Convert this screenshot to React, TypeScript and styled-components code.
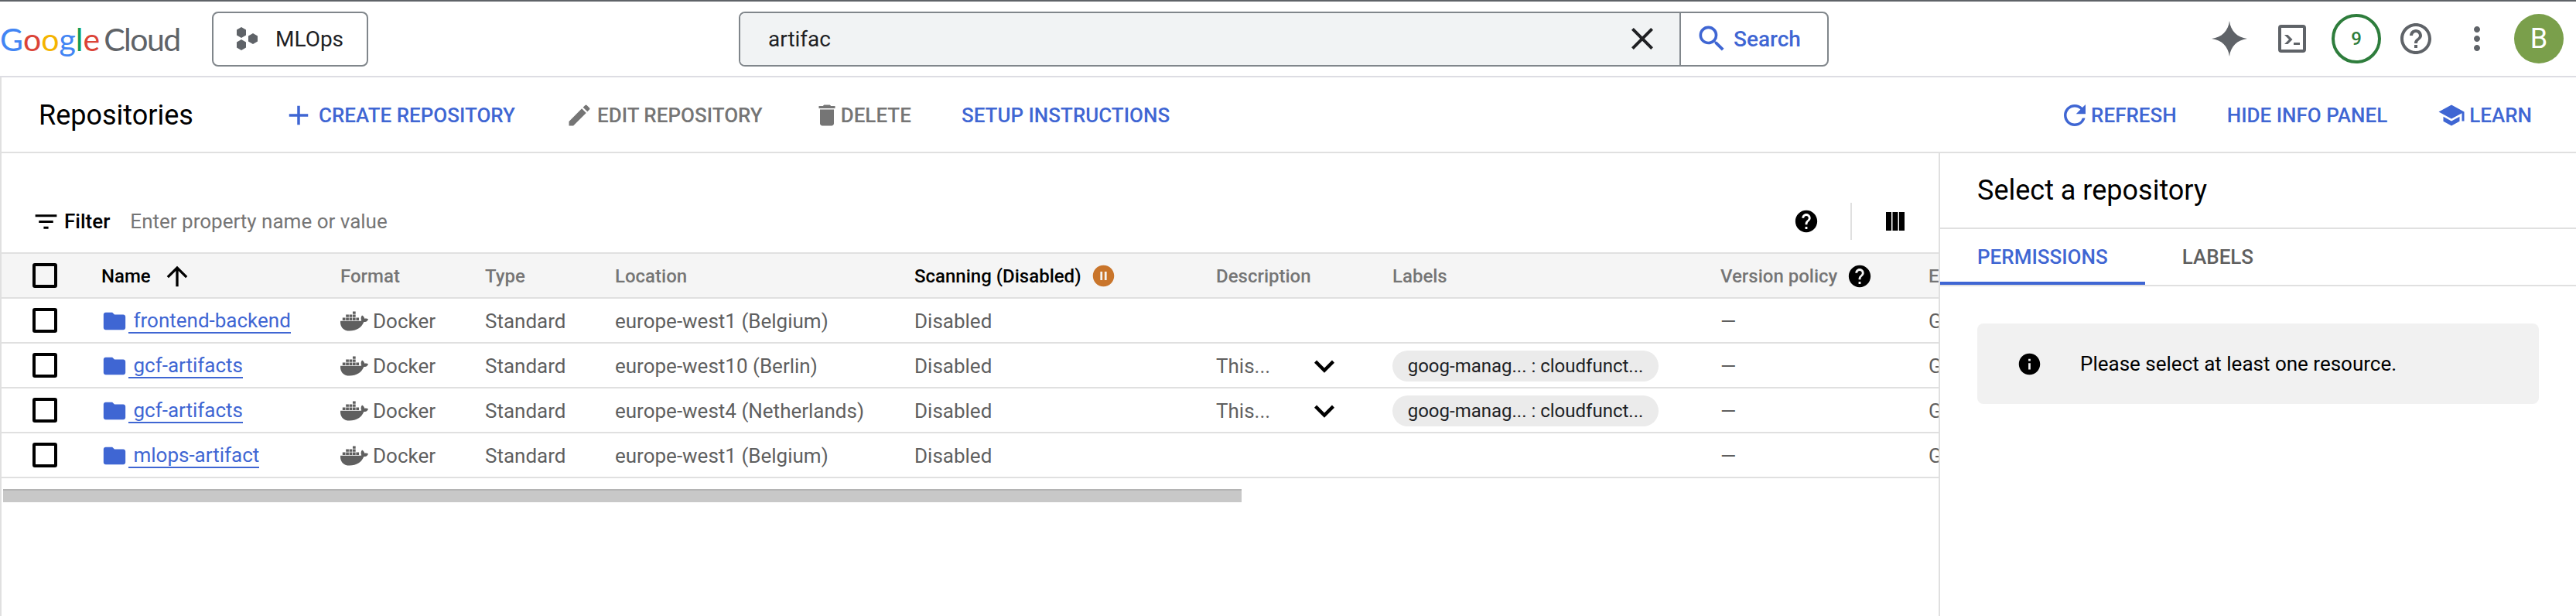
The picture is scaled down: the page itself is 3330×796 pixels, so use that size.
import React from 'react';
import styled, { createGlobalStyle } from 'styled-components';
import {
  MdAdd,
  MdArrowUpward,
  MdClose,
  MdCreate,
  MdDelete,
  MdExpandMore,
  MdFilterList,
  MdFolder,
  MdHelp,
  MdHelpOutline,
  MdInfo,
  MdMoreVert,
  MdPauseCircleFilled,
  MdRefresh,
  MdSchool,
  MdSearch,
} from 'react-icons/md';
import { FaDocker } from 'react-icons/fa';

const BLUE = '#3f66d3';
const LINE = '#e0e0e0';

type Repo = { name: string; location: string; managed: boolean };

const repos: Repo[] = [
  { name: 'frontend-backend', location: 'europe-west1 (Belgium)', managed: false },
  { name: 'gcf-artifacts', location: 'europe-west10 (Berlin)', managed: true },
  { name: 'gcf-artifacts', location: 'europe-west4 (Netherlands)', managed: true },
  { name: 'mlops-artifact', location: 'europe-west1 (Belgium)', managed: false },
];

const App: React.FC = () => {
  return (
    <>
      <GlobalStyle />
      <Page>
        <TopBar>
          <Logo>
            <Letter $c="#4285f4">G</Letter>
            <Letter $c="#db4437">o</Letter>
            <Letter $c="#f4b400">o</Letter>
            <Letter $c="#4285f4">g</Letter>
            <Letter $c="#0f9d58">l</Letter>
            <Letter $c="#db4437">e</Letter>
            <CloudWord>Cloud</CloudWord>
          </Logo>
          <ProjectButton>
            <svg width="28" height="30" viewBox="0 0 28 30" fill="#5f6368">
              <polygon points="6,0 12,3.5 12,10.5 6,14 0,10.5 0,3.5" />
              <polygon points="6,16 12,19.5 12,26.5 6,30 0,26.5 0,19.5" />
              <polygon points="21,8 27,11.5 27,18.5 21,22 15,18.5 15,11.5" />
            </svg>
            MLOps
          </ProjectButton>
          <SearchBox>
            <SearchInput>
              <span>artifac</span>
              <MdClose size={48} color="#202124" />
            </SearchInput>
            <SearchButton>
              <MdSearch size={44} />
              Search
            </SearchButton>
          </SearchBox>
          <TopIcons>
            <svg width="46" height="46" viewBox="0 0 46 46" fill="#5f6368">
              <path d="M23 0C24.5 13 33 21.5 46 23 33 24.5 24.5 33 23 46 21.5 33 13 24.5 0 23 13 21.5 21.5 13 23 0Z" />
            </svg>
            <TerminalIcon>
              <svg width="36" height="36" viewBox="0 0 36 36" fill="none">
                <rect x="2" y="2" width="32" height="32" rx="2" stroke="#5f6368" strokeWidth="4" />
                <path d="M8 13h4.5l6 6-6 6H8l6-6z" fill="#5f6368" />
                <rect x="20" y="23" width="8" height="3" fill="#5f6368" />
              </svg>
            </TerminalIcon>
            <CountBadge>9</CountBadge>
            <HelpOutlineIcon>
              <MdHelpOutline size={48} color="#5f6368" />
            </HelpOutlineIcon>
            <DotsIcon>
              <MdMoreVert size={48} color="#5f6368" />
            </DotsIcon>
            <Avatar>B</Avatar>
          </TopIcons>
        </TopBar>

        <Toolbar>
          <PageTitle>Repositories</PageTitle>
          <ActionGroup>
            <Action>
              <MdAdd size={42} />
              CREATE REPOSITORY
            </Action>
            <Action $muted>
              <MdCreate size={36} />
              EDIT REPOSITORY
            </Action>
            <Action $muted $tight>
              <MdDelete size={36} />
              DELETE
            </Action>
            <Action>SETUP INSTRUCTIONS</Action>
          </ActionGroup>
          <RightActions>
            <Action $tight>
              <MdRefresh size={42} />
              REFRESH
            </Action>
            <Action>HIDE INFO PANEL</Action>
            <Action>
              <MdSchool size={36} />
              LEARN
            </Action>
          </RightActions>
        </Toolbar>

        <Main>
          <TableArea>
            <FilterBar>
              <MdFilterList size={37} color="#000" />
              <FilterLabel>Filter</FilterLabel>
              <FilterHint>Enter property name or value</FilterHint>
              <FilterTools>
                <MdHelp size={34} color="#000" />
                <ToolDivider />
                <svg width="24" height="24" viewBox="0 0 24 24" fill="#000">
                  <rect x="0" width="7" height="24" />
                  <rect x="8.5" width="7" height="24" />
                  <rect x="17" width="7" height="24" />
                </svg>
              </FilterTools>
            </FilterBar>

            <HeadRow>
              <CheckBox />
              <HeadCell $strong>
                Name
                <SortIcon>
                  <MdArrowUpward size={40} color="#000" />
                </SortIcon>
              </HeadCell>
              <HeadCell>Format</HeadCell>
              <HeadCell>Type</HeadCell>
              <HeadCell>Location</HeadCell>
              <HeadCell $strong>
                Scanning (Disabled)
                <MdPauseCircleFilled size={33} color="#c9752b" />
              </HeadCell>
              <HeadCell>Description</HeadCell>
              <HeadCell>Labels</HeadCell>
              <HeadCell>
                Version policy
                <MdHelp size={34} color="#000" />
              </HeadCell>
              <HeadCell>Encryption</HeadCell>
            </HeadRow>

            {repos.map((repo, i) => (
              <BodyRow key={i}>
                <CheckBox />
                <NameCell>
                  <MdFolder size={34} color={BLUE} />
                  <RepoLink>&nbsp;{repo.name}</RepoLink>
                </NameCell>
                <DockerCell>
                  <FaDocker size={36} color="#5f5f5f" />
                  Docker
                </DockerCell>
                <Cell>Standard</Cell>
                <Cell>{repo.location}</Cell>
                <Cell>Disabled</Cell>
                <DescriptionCell>
                  {repo.managed && (
                    <>
                      <span>This...</span>
                      <MdExpandMore size={52} color="#000" />
                    </>
                  )}
                </DescriptionCell>
                <Cell>{repo.managed && <LabelChip>goog-manag... : cloudfunct...</LabelChip>}</Cell>
                <Cell>—</Cell>
                <Cell>Google-managed</Cell>
              </BodyRow>
            ))}

            <ScrollTrack>
              <ScrollThumb />
            </ScrollTrack>
          </TableArea>

          <InfoPanel>
            <PanelTitle>Select a repository</PanelTitle>
            <Tabs>
              <Tab $active>PERMISSIONS</Tab>
              <Tab>LABELS</Tab>
            </Tabs>
            <Notice>
              <MdInfo size={33} color="#000" />
              Please select at least one resource.
            </Notice>
          </InfoPanel>
        </Main>
      </Page>
    </>
  );
};

export default App;

/* ====================== Styled Components ====================== */

const GlobalStyle = createGlobalStyle`
  html, body {
    margin: 0;
    padding: 0;
    background: #ffffff;
  }
  body {
    font-family: 'Roboto', 'Liberation Sans', sans-serif;
    overflow: hidden;
  }
`;

const Page = styled.div`
  width: 3330px;
  height: 796px;
  display: flex;
  flex-direction: column;
  overflow: hidden;
`;

const TopBar = styled.header`
  display: flex;
  align-items: center;
  height: 96px;
  flex: none;
  border-top: 2px solid #5f6368;
  border-bottom: 2px solid #dddde3;
`;

const Logo = styled.div`
  display: flex;
  align-items: baseline;
  width: 274px;
  flex: none;
  font-family: 'Lato', sans-serif;
  font-size: 41px;
`;

const Letter = styled.span<{ $c: string }>`
  color: ${(p) => p.$c};
`;

const CloudWord = styled.span`
  margin-left: 5px;
  letter-spacing: -1.5px;
  color: #5f6368;
`;

const ProjectButton = styled.div`
  display: flex;
  align-items: center;
  gap: 22px;
  box-sizing: border-box;
  width: 202px;
  height: 71px;
  padding-left: 30px;
  border: 2px solid #80868b;
  border-radius: 8px;
  font-size: 28px;
  color: #202124;
`;

const SearchBox = styled.div`
  display: flex;
  box-sizing: border-box;
  width: 1409px;
  height: 71px;
  margin-left: 479px;
  flex: none;
  border: 2px solid #80868b;
  border-radius: 8px;
  overflow: hidden;
`;

const SearchInput = styled.div`
  display: flex;
  align-items: center;
  justify-content: space-between;
  flex: 1;
  padding: 0 24px 0 36px;
  background: #f1f3f4;
  font-size: 28px;
  color: #202124;
`;

const SearchButton = styled.div`
  display: flex;
  align-items: center;
  gap: 6px;
  box-sizing: border-box;
  width: 191px;
  padding-left: 18px;
  border-left: 2px solid #80868b;
  font-size: 28px;
  font-weight: 500;
  color: ${BLUE};
`;

const TopIcons = styled.div`
  display: flex;
  align-items: center;
  margin-left: 495px;
`;

const TerminalIcon = styled.span`
  display: flex;
  margin-left: 40px;
`;

const CountBadge = styled.div`
  display: flex;
  align-items: center;
  justify-content: center;
  box-sizing: border-box;
  width: 64px;
  height: 64px;
  margin-left: 33px;
  border: 4px solid #2e7d3c;
  border-radius: 50%;
  font-size: 24px;
  font-weight: 500;
  color: #2e7d3c;
`;

const HelpOutlineIcon = styled.span`
  display: flex;
  margin-left: 21px;
`;

const DotsIcon = styled.span`
  display: flex;
  margin-left: 31px;
`;

const Avatar = styled.div`
  display: flex;
  align-items: center;
  justify-content: center;
  width: 64px;
  height: 64px;
  margin-left: 24px;
  border-radius: 50%;
  background: #7a9f4b;
  font-size: 36px;
  color: #ffffff;
`;

const Toolbar = styled.div`
  display: flex;
  align-items: center;
  box-sizing: border-box;
  height: 98px;
  flex: none;
  padding: 2px 57px 0 48px;
  border-left: 2px solid ${LINE};
  border-bottom: 2px solid ${LINE};
`;

const PageTitle = styled.h1`
  width: 315px;
  flex: none;
  margin: 0;
  font-size: 36px;
  font-weight: 400;
  color: #000000;
`;

const ActionGroup = styled.div`
  display: flex;
  align-items: center;
  gap: 65px;
`;

const RightActions = styled(ActionGroup)`
  margin-left: auto;
`;

const Action = styled.div<{ $muted?: boolean; $tight?: boolean }>`
  display: flex;
  align-items: center;
  gap: ${(p) => (p.$tight ? '0' : '5px')};
  font-size: 26px;
  font-weight: 500;
  white-space: nowrap;
  color: ${(p) => (p.$muted ? '#757575' : BLUE)};
`;

const Main = styled.div`
  display: flex;
  flex: 1;
  min-height: 0;
`;

const TableArea = styled.section`
  box-sizing: border-box;
  width: 2506px;
  flex: none;
  border-left: 2px solid ${LINE};
  overflow: hidden;
`;

const FilterBar = styled.div`
  display: flex;
  align-items: center;
  box-sizing: border-box;
  height: 130px;
  padding: 48px 44px 0 39px;
  border-bottom: 2px solid ${LINE};
`;

const FilterLabel = styled.span`
  margin-left: 5px;
  font-size: 26px;
  font-weight: 500;
  color: #000000;
`;

const FilterHint = styled.span`
  margin-left: 26px;
  font-size: 26px;
  color: #757575;
`;

const FilterTools = styled.div`
  display: flex;
  align-items: center;
  margin-left: auto;
`;

const ToolDivider = styled.span`
  width: 2px;
  height: 48px;
  margin: 0 44px 0 40px;
  background: ${LINE};
`;

const tableColumns = `89px 309px 187px 168px 387px 390px 228px 424px 269px 260px`;

const HeadRow = styled.div`
  display: grid;
  grid-template-columns: ${tableColumns};
  align-items: center;
  box-sizing: border-box;
  height: 58px;
  padding-left: 40px;
  background: #f5f5f5;
  border-bottom: 2px solid ${LINE};
`;

const HeadCell = styled.div<{ $strong?: boolean }>`
  display: flex;
  align-items: center;
  gap: 12px;
  padding-top: 1px;
  white-space: nowrap;
  font-size: 24px;
  font-weight: 500;
  color: ${(p) => (p.$strong ? '#000000' : '#757575')};
`;

const SortIcon = styled.span`
  display: flex;
  margin-left: 2px;
`;

const CheckBox = styled.span`
  display: block;
  box-sizing: border-box;
  width: 32px;
  height: 32px;
  border: 4px solid #000000;
  border-radius: 3px;
`;

const BodyRow = styled.div`
  display: grid;
  grid-template-columns: ${tableColumns};
  align-items: center;
  box-sizing: border-box;
  height: 58px;
  padding-left: 40px;
  border-bottom: 2px solid ${LINE};
`;

const Cell = styled.div`
  padding-top: 1px;
  white-space: nowrap;
  font-size: 26px;
  color: #5f5f5f;
`;

const NameCell = styled(Cell)`
  display: flex;
  align-items: center;
`;

const RepoLink = styled.span`
  margin-left: 1px;
  color: ${BLUE};
  border-bottom: 2px solid ${BLUE};
  line-height: 30px;
`;

const DockerCell = styled(Cell)`
  display: flex;
  align-items: center;
  gap: 6px;
`;

const DescriptionCell = styled(Cell)`
  display: flex;
  align-items: center;
  gap: 44px;
`;

const LabelChip = styled.span`
  display: inline-block;
  box-sizing: border-box;
  width: 344px;
  height: 40px;
  line-height: 40px;
  text-align: center;
  border-radius: 20px;
  background: #ebebeb;
  font-size: 24px;
  color: #202124;
`;

const ScrollTrack = styled.div`
  padding: 14px 0 0 2px;
`;

const ScrollThumb = styled.div`
  box-sizing: border-box;
  width: 1601px;
  height: 17px;
  background: #c8c8c8;
  border-top: 2px solid #b4b4b4;
`;

const InfoPanel = styled.aside`
  flex: 1;
  border-left: 2px solid ${LINE};
`;

const PanelTitle = styled.h2`
  display: flex;
  align-items: center;
  box-sizing: border-box;
  height: 98px;
  margin: 0;
  padding-left: 48px;
  font-size: 36px;
  font-weight: 400;
  color: #000000;
  border-bottom: 2px solid ${LINE};
`;

const Tabs = styled.div`
  display: flex;
  border-bottom: 2px solid ${LINE};
`;

const Tab = styled.div<{ $active?: boolean }>`
  display: flex;
  align-items: center;
  box-sizing: border-box;
  height: 72px;
  padding: 4px 48px 0;
  font-size: 26px;
  font-weight: 500;
  color: ${(p) => (p.$active ? BLUE : '#5f5f5f')};
  border-bottom: 4px solid ${(p) => (p.$active ? BLUE : 'transparent')};
`;

const Notice = styled.div`
  display: flex;
  align-items: center;
  gap: 49px;
  height: 104px;
  margin: 48px 48px 0;
  padding-left: 51px;
  border-radius: 8px;
  background: #f1f1f1;
  font-size: 26px;
  color: #000000;
`;
